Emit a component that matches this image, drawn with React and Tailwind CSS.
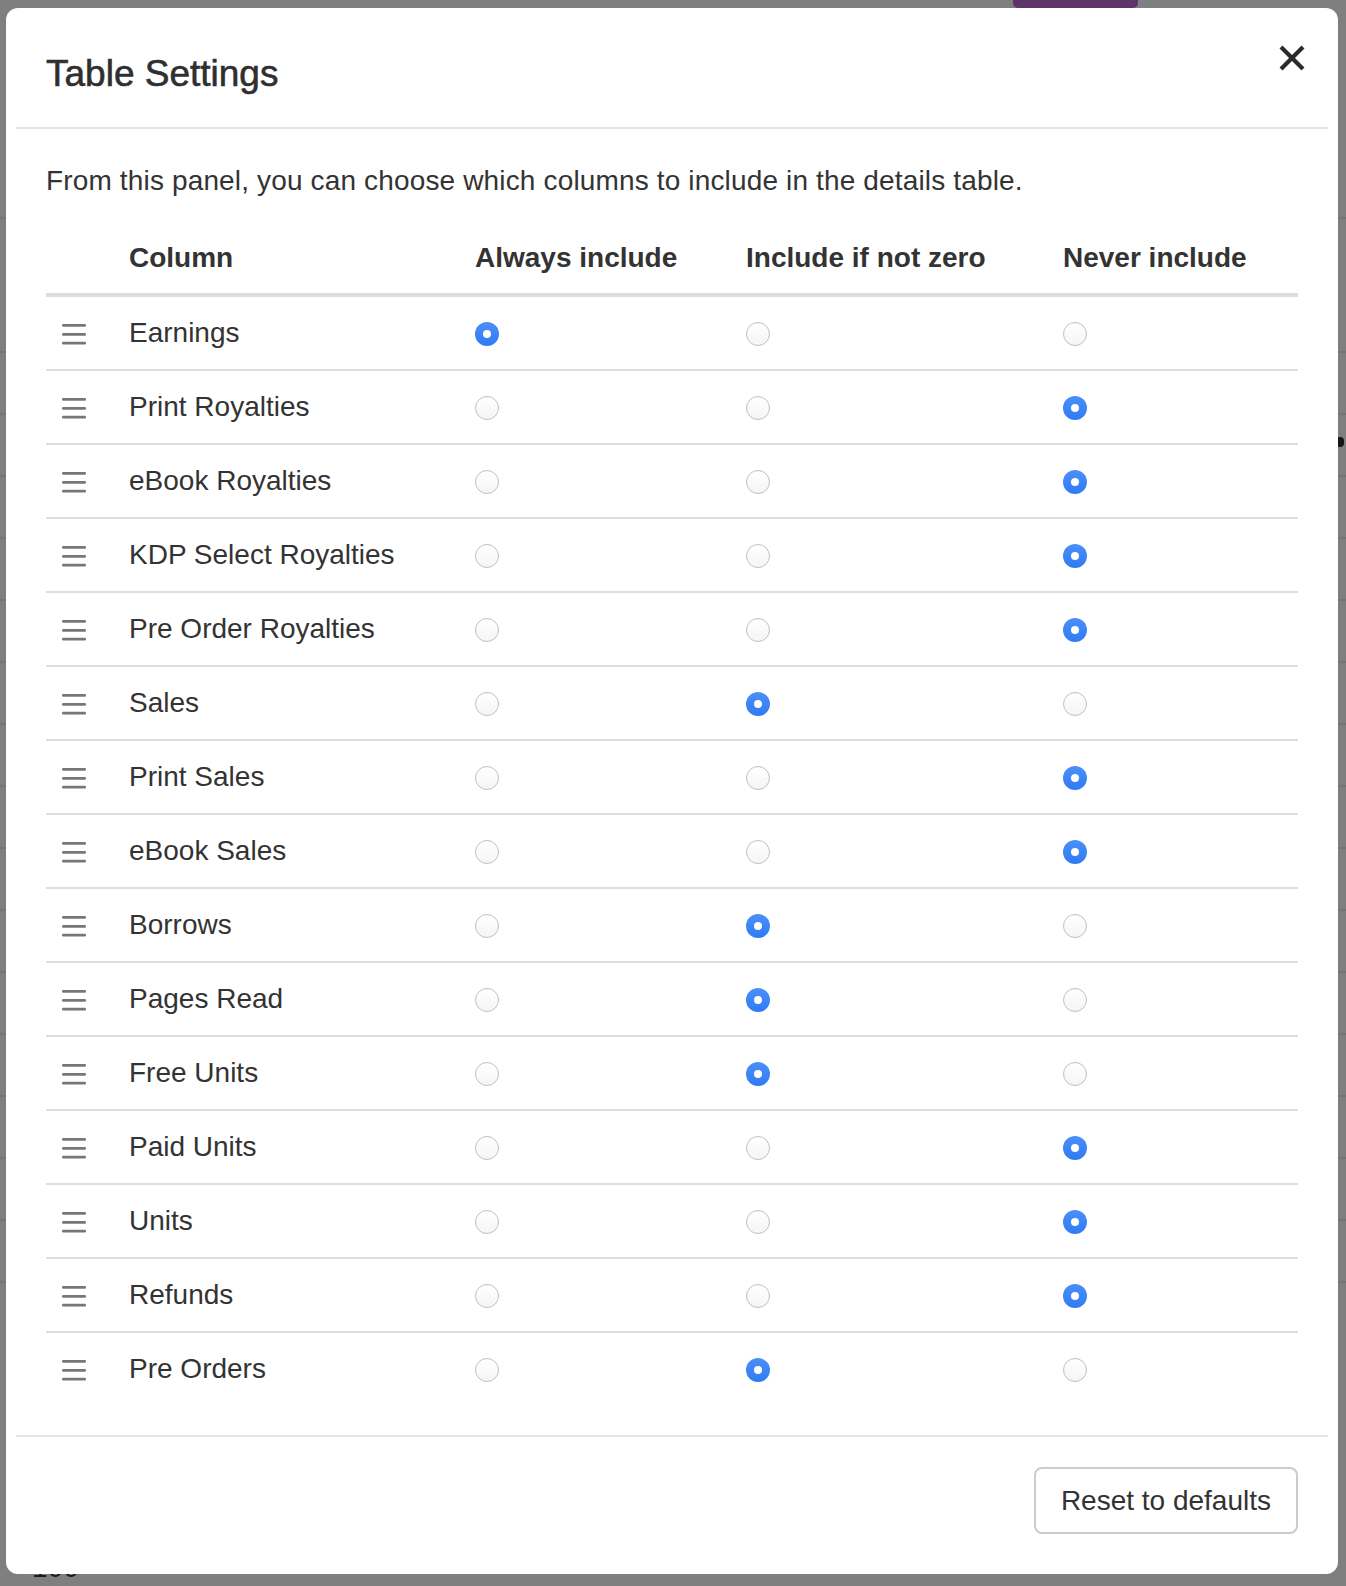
import React from "react";

const rows = [
  ["Earnings", 0],
  ["Print Royalties", 2],
  ["eBook Royalties", 2],
  ["KDP Select Royalties", 2],
  ["Pre Order Royalties", 2],
  ["Sales", 1],
  ["Print Sales", 2],
  ["eBook Sales", 2],
  ["Borrows", 1],
  ["Pages Read", 1],
  ["Free Units", 1],
  ["Paid Units", 2],
  ["Units", 2],
  ["Refunds", 2],
  ["Pre Orders", 1],
];

function Radio({ checked }) {
  if (checked) {
    return (
      <span className="mt-[2px] flex h-[24px] w-[24px] items-center justify-center rounded-full bg-gradient-to-b from-[#4b8ff8] to-[#2f7bf5]">
        <span className="h-[8px] w-[8px] rounded-full bg-white" />
      </span>
    );
  }
  return (
    <span className="mt-[2px] block h-[24px] w-[24px] rounded-full border-[1.5px] border-[#c0c0c0] bg-gradient-to-b from-white to-[#f5f5f5]" />
  );
}

function DragIcon() {
  return (
    <svg width="24" height="21" viewBox="0 0 24 21" className="mt-[2px]">
      <rect x="0" y="0" width="24" height="2.8" rx="1.3" fill="#777777" />
      <rect x="0" y="8.9" width="24" height="2.8" rx="1.3" fill="#777777" />
      <rect x="0" y="17.8" width="24" height="2.8" rx="1.3" fill="#777777" />
    </svg>
  );
}

export default function App() {
  const bgRows = Array.from({ length: 16 });
  return (
    <div className="relative h-[1586px] w-[1346px] overflow-hidden bg-[#7f7f7f] font-['Liberation_Sans',Arial,sans-serif] text-[#333]">
      {/* dimmed page behind the dialog */}
      <div className="flex flex-col">
        <div className="ml-[1013px] h-[8px] w-[125px] rounded-b-[5px] bg-[#5e3469]" />
        <div className="h-[209px]" />
        <div className="h-[134px] border-t-2 border-[#747474]" />
        {bgRows.map((_, i) => (
          <div key={i} className="h-[62px] border-t-2 border-[#747474]">
            {i === 1 && <div className="ml-[1336px] mt-[22px] h-[10px] w-[8px] rounded-full bg-[#151515]" />}
          </div>
        ))}
        <div className="mt-[205px] pl-[32px] text-[28px] leading-[40px] text-[#1c1c1c]">100</div>
      </div>

      {/* dialog */}
      <div className="absolute left-[6px] top-[8px] w-[1332px] rounded-[12px] bg-white p-[10px]">
        <div className="flex items-start justify-between px-[30px] pb-[28px] pt-[31px]">
          <h4 className="text-[37px] leading-[50px] text-[#2f2f2f] [-webkit-text-stroke:0.6px_#2f2f2f]">Table Settings</h4>
          <svg width="26" height="26" viewBox="0 0 26 26" className="mr-[-7px] mt-[-4px]">
            <path d="M2 2 L24 24 M24 2 L2 24" stroke="#2b2b2b" strokeWidth="4.2" fill="none" />
          </svg>
        </div>
        <div className="border-t-2 border-[#e5e5e5] px-[30px] pb-[30px] pt-[32px]">
          <p className="mb-[21px] text-[28px] leading-[40px] tracking-[0.15px]">
            From this panel, you can choose which columns to include in the details table.
          </p>
          <div className="grid h-[75px] grid-cols-[67px_346px_271px_317px_251px] items-center border-b-4 border-[#dddddd] text-[28px] font-bold leading-[40px]">
            <div />
            <div className="px-[16px]">Column</div>
            <div className="px-[16px]">Always include</div>
            <div className="px-[16px]">Include if not zero</div>
            <div className="px-[16px]">Never include</div>
          </div>
          {rows.map(([name, sel], i) => (
            <div
              key={name}
              className={
                "grid h-[72px] grid-cols-[67px_346px_271px_317px_251px] items-center text-[28px] leading-[40px] " +
                (i === 0 ? "" : "box-content border-t-2 border-[#dddddd]")
              }
            >
              <div className="flex px-[16px]">
                <DragIcon />
              </div>
              <div className="px-[16px]">{name}</div>
              <div className="flex px-[16px]">
                <Radio checked={sel === 0} />
              </div>
              <div className="flex px-[16px]">
                <Radio checked={sel === 1} />
              </div>
              <div className="flex px-[16px]">
                <Radio checked={sel === 2} />
              </div>
            </div>
          ))}
        </div>
        <div className="flex justify-end border-t-2 border-[#e5e5e5] px-[30px] pb-[30px] pt-[30px]">
          <button className="h-[67px] rounded-[8px] border-2 border-[#cccccc] bg-white px-[25px] text-[28px] leading-[40px] text-[#333]">
            Reset to defaults
          </button>
        </div>
      </div>
    </div>
  );
}
